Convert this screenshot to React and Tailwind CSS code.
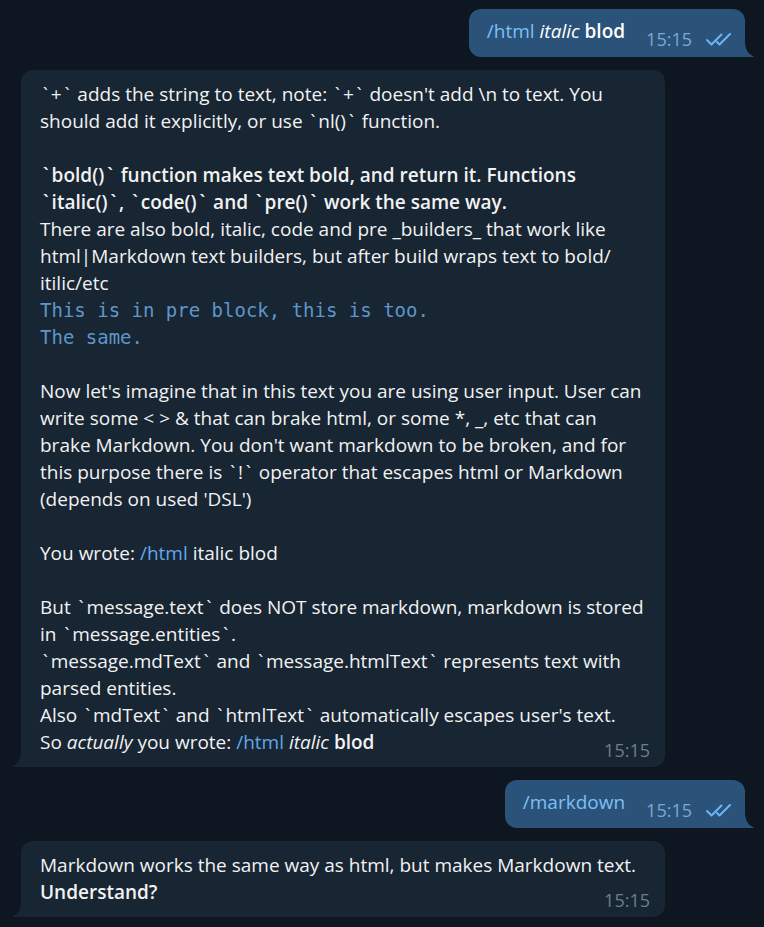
import React from "react";

const font = { fontFamily: '"Open Sans", "Noto Sans", sans-serif' };

function T({ s }) {
  const parts = s.split("`");
  const out = [];
  parts.forEach((p, i) => {
    if (i > 0) out.push(<span key={"b" + i} className="px-[2.75px]">`</span>);
    if (p) out.push(<React.Fragment key={"t" + i}>{p}</React.Fragment>);
  });
  return <>{out}</>;
}

function Checks() {
  return (
    <svg width="28" height="13" viewBox="0 0 28 13" fill="none" stroke="#6cb6f7" strokeWidth="2" strokeLinecap="round" strokeLinejoin="round">
      <polyline points="2,7 6.5,11.5 16.5,1.5" />
      <polyline points="12,9 14.5,11.5 25,1" />
    </svg>
  );
}

function TailIn({ color }) {
  return (
    <svg className="absolute bottom-0 -left-[9px]" width="10" height="16" viewBox="0 0 10 16">
      <path d="M10 0 L9 0 C9 8 6 13 1 15 C0.3 15.3 0.4 16 1 16 L10 16 Z" fill={color} />
    </svg>
  );
}

function TailOut({ color }) {
  return (
    <svg className="absolute bottom-0 -right-[9px]" width="10" height="16" viewBox="0 0 10 16">
      <path d="M0 0 L1 0 C1 8 4 13 9 15 C9.7 15.3 9.6 16 9 16 L0 16 Z" fill={color} />
    </svg>
  );
}

function Outgoing({ children }) {
  return (
    <div className="flex justify-end pr-[19px]">
      <div className="relative bg-[#2b5278] rounded-[12px] rounded-br-none pt-[9px] pb-[4px] pl-[18px] pr-[12px] flex items-start">
        <div className="leading-[27px] text-[19px] text-white whitespace-nowrap">{children}</div>
        <div className="flex items-center gap-[13px] ml-[21px] mt-[8px]">
          <span className="text-[18px] leading-[27px] text-[#7da8d3]">15:15</span>
          <Checks />
        </div>
        <TailOut color="#2b5278" />
      </div>
    </div>
  );
}

function Incoming({ lines, last }) {
  return (
    <div className="flex pl-[21px]">
      <div className="relative bg-[#182533] rounded-[12px] rounded-bl-none w-[644px] pt-[11px] pb-[3px] pl-[19px] pr-[15px] text-[19px] leading-[27px] text-[#f2f2f2]">
        {lines.map((l, i) => (
          <div key={i} className="whitespace-nowrap h-[27px]">
            {typeof l === "string" ? <T s={l} /> : l}
          </div>
        ))}
        <div className="flex justify-between items-start">
          <div className="whitespace-nowrap">{last}</div>
          <span className="text-[18px] leading-[27px] text-[#6d7f8f] mt-[8px]">15:15</span>
        </div>
        <TailIn color="#182533" />
      </div>
    </div>
  );
}

const Link = ({ children }) => <span className="text-[#62a8ea]">{children}</span>;
const Pre = ({ children }) => (
  <span className="text-[#5d96c9] text-[19px]" style={{ fontFamily: '"DejaVu Sans Mono", monospace' }}>{children}</span>
);
const B = ({ children }) => <span className="font-semibold">{children}</span>;

export default function App() {
  const bigLines = [
    "`+` adds the string to text, note: `+` doesn't add \\n to text. You",
    "should add it explicitly, or use `nl()` function.",
    "",
    <B><T s="`bold()` function makes text bold, and return it. Functions" /></B>,
    <B><T s="`italic()`, `code()` and `pre()` work the same way." /></B>,
    "There are also bold, italic, code and pre _builders_ that work like",
    "html|Markdown text builders, but after build wraps text to bold/",
    "itilic/etc",
    <Pre>This is in pre block, this is too.</Pre>,
    <Pre>The same.</Pre>,
    "",
    "Now let's imagine that in this text you are using user input. User can",
    "write some < > & that can brake html, or some *, _, etc that can",
    "brake Markdown. You don't want markdown to be broken, and for",
    "this purpose there is `!` operator that escapes html or Markdown",
    "(depends on used 'DSL')",
    "",
    <span>You wrote: <Link>/html</Link> italic blod</span>,
    "",
    "But `message.text` does NOT store markdown, markdown is stored",
    "in `message.entities`.",
    "`message.mdText` and `message.htmlText` represents text with",
    "parsed entities.",
    "Also `mdText` and `htmlText` automatically escapes user's text.",
  ];
  return (
    <div className="min-h-[927px] w-[764px] bg-[#0e1621] pt-[9px] flex flex-col gap-[13px]" style={font}>
      <Outgoing>
        <span className="text-[#7cc0f7]">/html</span> <i>italic</i> <B>blod</B>
      </Outgoing>
      <Incoming
        lines={bigLines}
        last={<span>So <i>actually</i> you wrote: <Link>/html</Link> <i>italic</i> <B>blod</B></span>}
      />
      <Outgoing>
        <span className="text-[#7cc0f7]">/markdown</span>
      </Outgoing>
      <Incoming
        lines={["Markdown works the same way as html, but makes Markdown text."]}
        last={<B>Understand?</B>}
      />
    </div>
  );
}
